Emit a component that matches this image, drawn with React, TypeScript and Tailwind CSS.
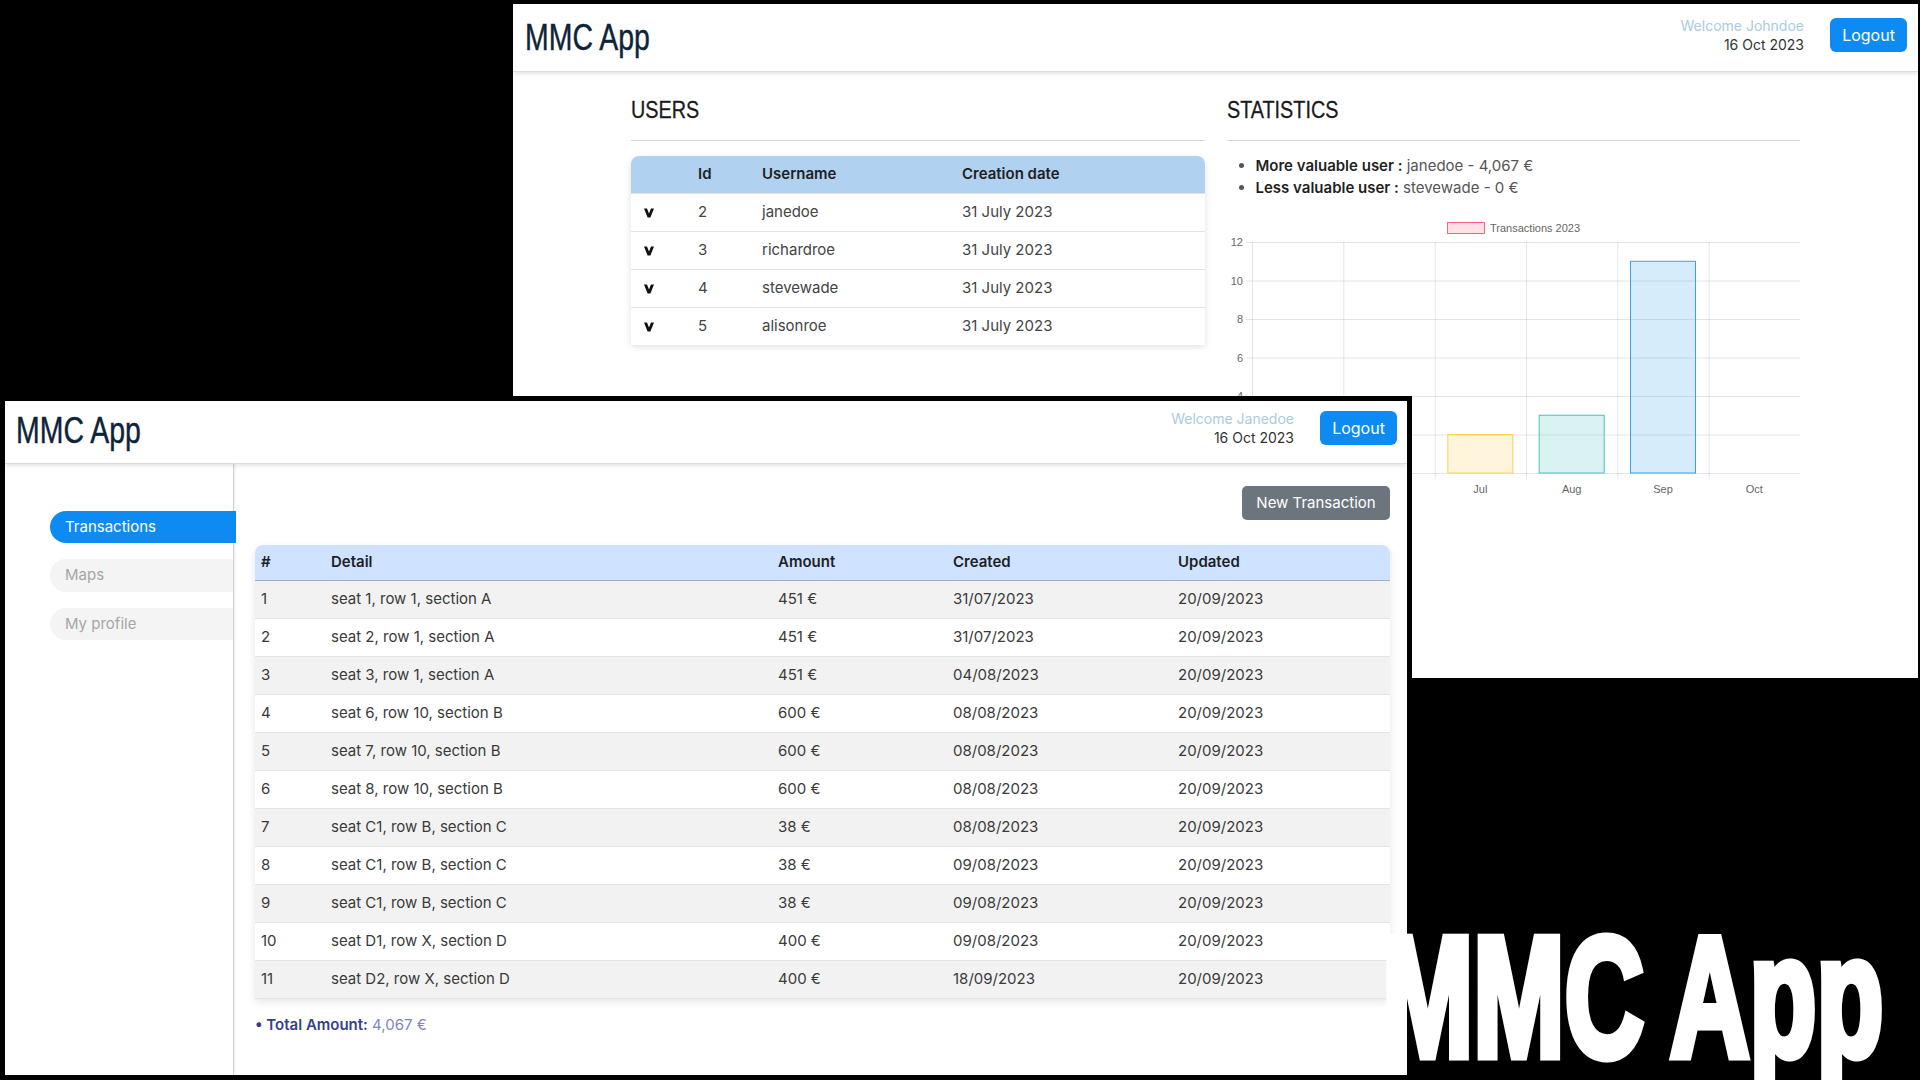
import React from "react";

const users = [
  { id: 2, name: "janedoe" },
  { id: 3, name: "richardroe" },
  { id: 4, name: "stevewade" },
  { id: 5, name: "alisonroe" },
];

const tx: [number, string, string, string][] = [
  [1, "seat 1, row 1, section A", "451 €", "31/07/2023"],
  [2, "seat 2, row 1, section A", "451 €", "31/07/2023"],
  [3, "seat 3, row 1, section A", "451 €", "04/08/2023"],
  [4, "seat 6, row 10, section B", "600 €", "08/08/2023"],
  [5, "seat 7, row 10, section B", "600 €", "08/08/2023"],
  [6, "seat 8, row 10, section B", "600 €", "08/08/2023"],
  [7, "seat C1, row B, section C", "38 €", "08/08/2023"],
  [8, "seat C1, row B, section C", "38 €", "09/08/2023"],
  [9, "seat C1, row B, section C", "38 €", "09/08/2023"],
  [10, "seat D1, row X, section D", "400 €", "09/08/2023"],
  [11, "seat D2, row X, section D", "400 €", "18/09/2023"],
];

function Chevron() {
  return (
    <svg width="10" height="10" viewBox="0 0 10 10" className="block">
      <polygon points="0,0.5 3,0.5 5,5.5 7,0.5 10,0.5 6.4,9.5 3.6,9.5" fill="#111" />
    </svg>
  );
}

function Title() {
  return (
    <span className="inline-block origin-left scale-x-[0.79] whitespace-nowrap text-[36px] leading-none text-[#0e2438] font-['Liberation_Sans',Arial,sans-serif] [-webkit-text-stroke:0.4px_#0e2438]">
      MMC App
    </span>
  );
}

function Heading({ children }: { children: React.ReactNode }) {
  return (
    <div className="border-b border-[#d9d9d9] pb-[16px]">
      <span className="inline-block origin-left scale-x-[0.86] whitespace-nowrap text-[23px] leading-[26px] text-[#1b1b1b] font-['Liberation_Sans',Arial,sans-serif] [-webkit-text-stroke:0.3px_#1b1b1b]">
        {children}
      </span>
    </div>
  );
}

function UserBlock({ name, date }: { name: string; date: string }) {
  return (
    <div className="flex items-center gap-[26px]">
      <div className="text-right text-[14px] leading-[19px]">
        <div className="text-[#a9cbe3]">Welcome {name}</div>
        <div className="text-[#333]">{date}</div>
      </div>
      <button className="h-[34px] w-[77px] rounded-[6px] bg-[#0d8bf2] text-[16px] text-white">
        Logout
      </button>
    </div>
  );
}

function Chart() {
  const left = 25;
  const right = 573;
  const top = 27;
  const bottom = 258;
  const step = (right - left) / 6;
  const yOf = (v: number) => bottom - v * ((bottom - top) / 12);
  const months = ["Jul", "Aug", "Sep", "Oct"];
  const bars = [
    { i: 2, v: 2, fill: "rgba(255,205,86,0.2)", stroke: "rgb(255,205,86)" },
    { i: 3, v: 3, fill: "rgba(75,192,192,0.2)", stroke: "rgb(75,192,192)" },
    { i: 4, v: 11, fill: "rgba(54,162,235,0.2)", stroke: "rgb(54,162,235)" },
  ];
  return (
    <svg width="573" height="290" className="block" fontFamily="Liberation Sans, Arial, sans-serif">
      <rect x="220.5" y="7.5" width="37" height="11" fill="rgba(255,99,132,0.2)" stroke="rgb(255,99,132)" />
      <text x="263" y="17" fontSize="11" fill="#666">Transactions 2023</text>
      {[0, 2, 4, 6, 8, 10, 12].map((v) => (
        <line key={v} x1={left - 6} x2={right} y1={yOf(v) + 0.5} y2={yOf(v) + 0.5} stroke="rgba(0,0,0,0.1)" />
      ))}
      {[4, 6, 8, 10, 12].map((v) => (
        <text key={v} x={left - 9} y={yOf(v) + 4} fontSize="11" fill="#666" textAnchor="end">
          {v}
        </text>
      ))}
      {Array.from({ length: 7 }).map((_, i) => (
        <line key={i} x1={left + i * step + 0.5} x2={left + i * step + 0.5} y1={top} y2={bottom + 6} stroke="rgba(0,0,0,0.1)" />
      ))}
      {months.map((m, i) => (
        <text key={m} x={left + step * (i + 2.5)} y={bottom + 20} fontSize="11" fill="#666" textAnchor="middle">
          {m}
        </text>
      ))}
      {bars.map((b) => {
        const cx = left + step * (b.i + 0.5);
        return (
          <rect
            key={b.i}
            x={cx - 32.5}
            y={yOf(b.v)}
            width="65"
            height={bottom - yOf(b.v)}
            fill={b.fill}
            stroke={b.stroke}
            strokeWidth="1"
          />
        );
      })}
    </svg>
  );
}

function BackWindow() {
  return (
    <div className="absolute left-[513px] top-[4px] h-[674px] w-[1405px] overflow-hidden bg-white">
      <header className="relative flex h-[68px] items-center justify-between border-b border-[#dcdcdc] pb-[6px] pl-[12px] pr-[11px] shadow-[0_2px_4px_rgba(0,0,0,0.1)]">
        <div className="pt-[6px]">
          <Title />
        </div>
        <UserBlock name="Johndoe" date="16 Oct 2023" />
      </header>
      <main className="mx-auto grid w-[1169px] grid-cols-2 gap-[22px] pt-[25px]">
        <section>
          <Heading>USERS</Heading>
          <div className="mt-[15px] overflow-hidden rounded-t-[8px] shadow-[0_2px_6px_rgba(0,0,0,0.12)] text-[15px]">
            <div className="grid h-[37px] grid-cols-[54px_64px_200px_1fr] items-center bg-[#b0d1ef] pl-[13px] font-semibold text-[#1f1f1f]">
              <span />
              <span>Id</span>
              <span>Username</span>
              <span>Creation date</span>
            </div>
            {users.map((u) => (
              <div
                key={u.id}
                className="grid h-[38px] grid-cols-[54px_64px_200px_1fr] items-center border-t border-[#e3e3e3] bg-white pl-[13px] text-[#444]"
              >
                <span>
                  <Chevron />
                </span>
                <span>{u.id}</span>
                <span>{u.name}</span>
                <span>31 July 2023</span>
              </div>
            ))}
          </div>
        </section>
        <section>
          <Heading>STATISTICS</Heading>
          <ul className="mt-[14px] list-disc pl-[29px] text-[15px] leading-[22px] text-[#555]">
            <li>
              <span className="font-semibold text-[#1f1f1f]">More valuable user :</span> janedoe - 4,067 €
            </li>
            <li>
              <span className="font-semibold text-[#1f1f1f]">Less valuable user :</span> stevewade - 0 €
            </li>
          </ul>
          <div className="mt-[16px]">
            <Chart />
          </div>
        </section>
      </main>
    </div>
  );
}

function FrontWindow() {
  return (
    <div className="absolute left-0 top-[396px] z-10 flex h-[684px] w-[1412px] flex-col border-[5px] border-black bg-white">
      <header className="relative z-10 flex h-[63px] shrink-0 items-center justify-between border-b border-[#dcdcdc] pb-[8px] pl-[11px] pr-[10px] shadow-[0_2px_4px_rgba(0,0,0,0.1)]">
        <div className="pt-[6px]">
          <Title />
        </div>
        <UserBlock name="Janedoe" date="16 Oct 2023" />
      </header>
      <div className="flex flex-1">
        <aside className="flex w-[229px] shrink-0 flex-col gap-[16px] border-r border-[#d0d0d0] pl-[45px] pt-[47px] text-[15px] shadow-[1px_0_3px_rgba(0,0,0,0.08)]">
          <div className="relative z-10 flex h-[32px] w-[186px] items-center rounded-l-[16px] bg-[#0d8bf2] pl-[15px] text-white">
            Transactions
          </div>
          <div className="flex h-[33px] w-[183px] items-center rounded-l-[16px] bg-[#f4f4f4] pl-[15px] text-[#a6a6a6]">
            Maps
          </div>
          <div className="flex h-[32px] w-[183px] items-center rounded-l-[16px] bg-[#f4f4f4] pl-[15px] text-[#a6a6a6]">
            My profile
          </div>
        </aside>
        <section className="flex-1 pl-[21px] pr-[17px] pt-[22px]">
          <div className="flex justify-end">
            <button className="h-[34px] w-[148px] rounded-[5px] bg-[#6c757d] text-[15px] text-white">
              New Transaction
            </button>
          </div>
          <div className="mt-[25px] overflow-hidden rounded-t-[8px] text-[15px] shadow-[0_3px_8px_rgba(0,0,0,0.1)]">
            <div className="grid h-[36px] grid-cols-[70px_447px_175px_225px_1fr] items-center border-b border-[#9fb0c4] bg-[#cfe2ff] pl-[6px] font-semibold text-[#1f1f1f]">
              <span>#</span>
              <span>Detail</span>
              <span>Amount</span>
              <span>Created</span>
              <span>Updated</span>
            </div>
            {tx.map(([n, d, a, c], i) => (
              <div
                key={n}
                className={
                  "grid h-[38px] grid-cols-[70px_447px_175px_225px_1fr] items-center border-b border-[#e4e4e4] pl-[6px] text-[#3a3a3a] " +
                  (i % 2 === 0 ? "bg-[#f2f2f2]" : "bg-white")
                }
              >
                <span>{n}</span>
                <span>{d}</span>
                <span>{a}</span>
                <span>{c}</span>
                <span>20/09/2023</span>
              </div>
            ))}
          </div>
          <div className="mt-[15px] text-[15px] leading-[22px]">
            <span className="font-semibold text-[#34418a]">• Total Amount:</span>{" "}
            <span className="text-[#7d87bd]">4,067 €</span>
          </div>
        </section>
      </div>
    </div>
  );
}

export default function App() {
  return (
    <div className="relative h-[1080px] w-[1920px] overflow-hidden bg-black font-['Inter','Noto_Sans',sans-serif]">
      <BackWindow />
      <FrontWindow />
      <div className="absolute left-[1382px] top-[912px] z-20 origin-left scale-x-[0.645] whitespace-nowrap text-[170px] font-bold leading-none text-white [-webkit-text-stroke:9px_white] font-['Liberation_Sans',Arial,sans-serif]">
        MMC App
      </div>
    </div>
  );
}
